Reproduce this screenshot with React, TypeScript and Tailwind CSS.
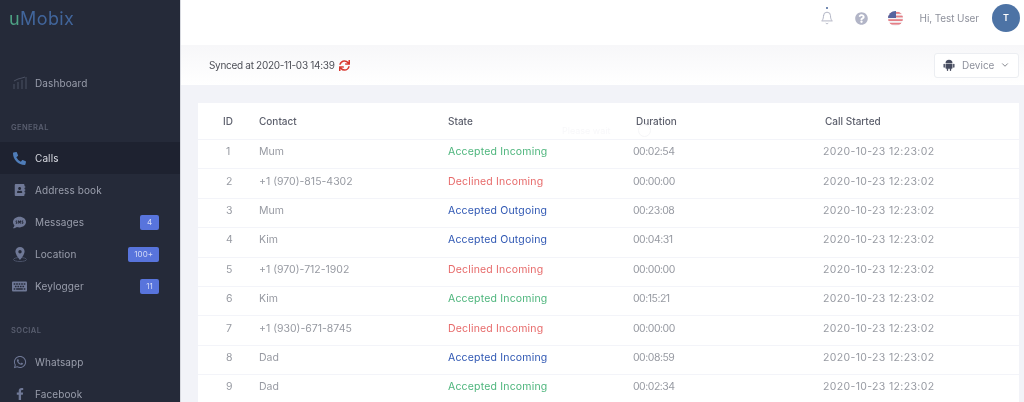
import React from "react";
import { FaPhoneAlt, FaAddressBook, FaSms, FaKeyboard, FaWhatsapp, FaFacebookF, FaSync, FaQuestionCircle } from "react-icons/fa";
import { LuBell, LuChevronDown } from "react-icons/lu";

const rows = [
  ["1", "Mum", "Accepted Incoming", "g", "00:02:54"],
  ["2", "+1 (970)-815-4302", "Declined Incoming", "r", "00:00:00"],
  ["3", "Mum", "Accepted Outgoing", "b", "00:23:08"],
  ["4", "Kim", "Accepted Outgoing", "b", "00:04:31"],
  ["5", "+1 (970)-712-1902", "Declined Incoming", "r", "00:00:00"],
  ["6", "Kim", "Accepted Incoming", "g", "00:15:21"],
  ["7", "+1 (930)-671-8745", "Declined Incoming", "r", "00:00:00"],
  ["8", "Dad", "Accepted Incoming", "b", "00:08:59"],
  ["9", "Dad", "Accepted Incoming", "g", "00:02:34"],
];

const stateColor: Record<string, string> = {
  g: "text-[#4db57c]",
  r: "text-[#e76a6a]",
  b: "text-[#2f57b3]",
};

function ChartIcon() {
  return (
    <svg width="14" height="14" viewBox="0 0 14 14" fill="none" stroke="#4b5163" strokeWidth="1">
      <path d="M1 13V8M5 13V6M9 13V4M13 13V1M1 5l4-2 4-1 3-1" />
    </svg>
  );
}

function LocationIcon() {
  return (
    <svg width="14" height="15" viewBox="0 0 14 15">
      <ellipse cx="7" cy="12.5" rx="6.5" ry="2" fill="none" stroke="#4b5268" strokeWidth="1" />
      <path fillRule="evenodd" fill="#6f7896" d="M7 0a4.6 4.6 0 0 1 4.6 4.6C11.600 8 7 13 7 13S2.400 8 2.400 4.600A4.600 4.600 0 0 1 7 0Zm0 3a1.700 1.700 0 1 0 0 3.400A1.700 1.700 0 0 0 7 3Z" />
    </svg>
  );
}

function AndroidIcon() {
  return (
    <svg width="12" height="12" viewBox="0 0 12 12" fill="#454b5e">
      <path d="M2.500 4.200a3.500 3.500 0 0 1 7 0Z" />
      <rect x="2.500" y="4.700" width="7" height="5" rx="0.800" />
      <rect x="0.500" y="4.700" width="1.400" height="4" rx="0.700" />
      <rect x="10.100" y="4.700" width="1.400" height="4" rx="0.700" />
      <rect x="3.800" y="9" width="1.400" height="3" rx="0.700" />
      <rect x="6.800" y="9" width="1.400" height="3" rx="0.700" />
    </svg>
  );
}

function Flag() {
  return (
    <svg width="15" height="15" viewBox="0 0 15 15">
      <defs>
        <clipPath id="flagclip"><circle cx="7.5" cy="7.5" r="7.5" /></clipPath>
      </defs>
      <g clipPath="url(#flagclip)">
        <rect width="15" height="15" fill="#f4f4f6" />
        <rect y="1" width="15" height="1.8" fill="#e57f86" />
        <rect y="4.6" width="15" height="1.8" fill="#e57f86" />
        <rect y="8.2" width="15" height="1.8" fill="#e57f86" />
        <rect y="11.8" width="15" height="1.8" fill="#e57f86" />
        <rect width="8" height="7" fill="#56649f" />
      </g>
    </svg>
  );
}

function NavItem({ icon, label, badge, active }: { icon: React.ReactNode; label: string; badge?: string; active?: boolean }) {
  return (
    <div className={`flex h-8 items-center pl-[8px] pr-[21px] ${active ? "bg-[#1e2230] text-[#d9dbe2]" : "text-[#9a9eac]"}`}>
      <span className="flex w-[23px] justify-center">{icon}</span>
      <span className="ml-[4px] flex-1 text-[10px] tracking-[0.1px]">{label}</span>
      {badge && (
        <span className="flex h-[15px] min-w-[19px] items-center justify-center rounded-[2px] bg-[#5874dc] px-[6px] text-[8px] text-[#d5dcf7]">
          {badge}
        </span>
      )}
    </div>
  );
}

const iconGrey = "text-[#6f7896]";

export default function App() {
  return (
    <div className="flex h-[402px] w-[1024px] overflow-hidden bg-[#f2f3f8] font-['Inter','Liberation_Sans',sans-serif] blur-[0.5px]">
      <aside className="flex w-[181px] shrink-0 flex-col border-r border-[#d8dae0] bg-[#252a39]">
        <div className="mt-[7px] pl-[9px] text-[18px] leading-[23px] tracking-[0.4px] text-[#41659b]">
          <span className="text-[#4da184]">u</span>Mobix
        </div>
        <div className="mt-[37px]">
          <NavItem icon={<ChartIcon />} label="Dashboard" />
        </div>
        <div className="mt-[23px] h-[11px] pl-[11px] text-[7.5px] leading-[11px] font-semibold tracking-[0.4px] text-[#5a5f70]">GENERAL</div>
        <div className="mt-[9px]">
          <NavItem active icon={<FaPhoneAlt className="text-[13px] text-[#4f7db9]" />} label="Calls" />
          <NavItem icon={<FaAddressBook className={`text-[12px] ${iconGrey}`} />} label="Address book" />
          <NavItem icon={<FaSms className={`text-[13px] ${iconGrey}`} />} label="Messages" badge="4" />
          <NavItem icon={<LocationIcon />} label="Location" badge="100+" />
          <NavItem icon={<FaKeyboard className={`text-[15px] ${iconGrey}`} />} label="Keylogger" badge="11" />
        </div>
        <div className="mt-[23px] h-[11px] pl-[11px] text-[7.5px] leading-[11px] font-semibold tracking-[0.4px] text-[#5a5f70]">SOCIAL</div>
        <div className="mt-[10px]">
          <NavItem icon={<FaWhatsapp className={`text-[14px] ${iconGrey}`} />} label="Whatsapp" />
          <NavItem icon={<FaFacebookF className={`text-[12px] ${iconGrey}`} />} label="Facebook" />
        </div>
      </aside>

      <main className="flex min-w-0 flex-1 flex-col">
        <header className="flex h-[45px] shrink-0 items-center justify-end bg-white pr-[4px] pb-[9px]">
          <div className="relative mr-[21px] text-[#aeb2c2]">
            <span className="absolute -top-[4px] left-[6px] h-[2px] w-[2px] rounded-full bg-[#46659a]" />
            <LuBell size={14} strokeWidth={1.6} />
          </div>
          <FaQuestionCircle className="mr-[20px] text-[13px] text-[#b2b5c7]" />
          <div className="mr-[17px]"><Flag /></div>
          <span className="mr-[13px] text-[10px] tracking-[-0.1px] text-[#8e919c]">Hi, Test User</span>
          <div className="flex h-7 w-7 items-center justify-center rounded-full bg-[#4d73a5] text-[9px] font-semibold text-white">T</div>
        </header>
        <div className="flex h-[40px] shrink-0 items-center justify-between bg-gradient-to-b from-[#f7f7f9] to-white pl-[28px] pr-[5px]">
          <div className="flex items-center text-[10px] tracking-[-0.3px] text-[#4d4f57]">
            Synced at 2020-11-03 14:39
            <FaSync className="ml-[4px] text-[11px] text-[#d8372e]" />
          </div>
          <div className="flex h-[25px] w-[85px] items-center rounded-[3px] border border-[#eceef2] bg-white pl-[8px] text-[10px] text-[#8e919c]">
            <AndroidIcon />
            <span className="ml-[7px]">Device</span>
            <LuChevronDown size={10} className="ml-[6px] text-[#6d7078]" />
          </div>
        </div>

        <section className="relative ml-[17px] mr-[5px] mt-[18px] flex-1 bg-white">
          <div className="grid h-[36px] grid-cols-[36px_189px_185px_190px_1fr] items-center pl-[25px] text-[10px] font-medium text-[#5d606d]">
            <span>ID</span>
            <span>Contact</span>
            <span>State</span>
            <span className="pl-[3px]">Duration</span>
            <span className="pl-[2px]">Call Started</span>
          </div>
          <div className="pointer-events-none absolute left-[364px] top-[21px] flex items-center text-[9px] text-[#f8f8fa]">
            Please wait
            <span className="ml-[28px] h-[13px] w-[13px] rounded-full border border-[#f6f6f8]" />
          </div>
          {rows.map((r) => (
            <div key={r[0]} className="grid h-[29.4px] grid-cols-[36px_189px_185px_190px_1fr] items-center border-t border-[#f3f4f9] pb-[4px] pl-[25px] text-[10.5px] text-[#979aa2]">
              <span className="pl-[3px]">{r[0]}</span>
              <span>{r[1]}</span>
              <span className={`tracking-[0.18px] ${stateColor[r[3]]}`}>{r[2]}</span>
              <span className="tracking-[-0.5px]">{r[4]}</span>
              <span className="tracking-[0.35px]">2020-10-23 12:23:02</span>
            </div>
          ))}
        </section>
      </main>
    </div>
  );
}
